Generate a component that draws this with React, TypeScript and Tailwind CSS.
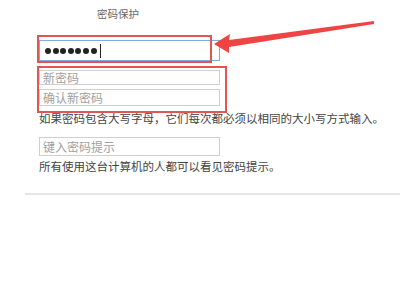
import React from "react";

export default function App() {
  const dots = [0, 1, 2, 3, 4, 5, 6];
  return (
    <div
      className="relative w-[400px] h-[300px] bg-white overflow-hidden"
      style={{ fontFamily: '"Noto Sans CJK SC", "Noto Sans", sans-serif' }}
    >
      <div className="flex flex-col pl-[39px]">
        <div className="pl-[58px] pt-[8px] h-[20px] text-[10.5px] leading-[12px] text-[#666]">密码保护</div>
        <div className="mt-[20px] w-[181px] h-[21px] border border-[#7eaee0] flex items-center pl-[5px]">
          <div className="flex gap-[1.6px]">
            {dots.map((d) => (
              <span key={d} className="w-[6px] h-[6px] rounded-full bg-[#222]" />
            ))}
          </div>
          <span className="ml-[3px] w-px h-[14px] bg-[#222]" />
        </div>
        <div className="mt-[9px] w-[181px] h-[15px] border border-[#cfcfcf] flex items-center pl-[3px] text-[12px] text-[#a0a0a0]">新密码</div>
        <div className="mt-[4px] w-[181px] h-[17px] border border-[#cfcfcf] flex items-center pl-[3px] text-[12px] text-[#a0a0a0]">确认新密码</div>
        <div className="mt-[4px] text-[11.5px] leading-[16px] text-[#444] whitespace-nowrap">如果密码包含大写字母，它们每次都必须以相同的大小写方式输入。</div>
        <div className="mt-[11px] w-[181px] h-[19px] border border-[#cfcfcf] flex items-center pl-[3px] text-[12px] text-[#a0a0a0]">键入密码提示</div>
        <div className="mt-[2px] text-[11.5px] leading-[16px] text-[#444] whitespace-nowrap">所有使用这台计算机的人都可以看见密码提示。</div>
      </div>
      <div className="ml-[25px] mt-[19px] h-[2px] bg-[#e6e6e6]" />

      <div className="absolute left-[37px] top-[35px] w-[175px] h-[28px] border-2 border-[#e25555]" />
      <div className="absolute left-[37px] top-[66px] w-[190px] h-[47px] border-2 border-[#e25555]" />

      <svg className="absolute left-0 top-0" width="400" height="300" viewBox="0 0 400 300">
        <polygon
          points="214,44 230,34 229,40 374,21 374,24 229,47 229,53"
          fill="#ef4444"
        />
      </svg>
    </div>
  );
}
